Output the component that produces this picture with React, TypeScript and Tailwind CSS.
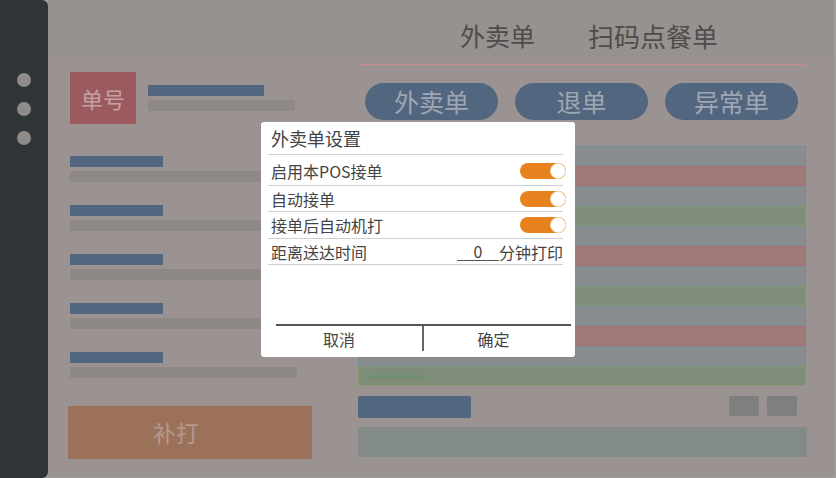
const ROWS: Array<'gray' | 'red' | 'green'> = [
  'gray', 'red', 'gray', 'green',
  'gray', 'red', 'gray', 'green',
  'gray', 'red', 'gray', 'green',
];

const rowClass: Record<'gray' | 'red' | 'green', string> = {
  gray: 'bg-[#898d8f] border-[#7b8a98]',
  red: 'bg-[#9e7a79] border-[#a47473]',
  green: 'bg-[#7f8c78] border-[#8a9a72]',
};

function Toggle() {
  return (
    <div className="relative w-[46px] h-[16px] rounded-full bg-[#e8821e] -mr-[3px]">
      <div className="absolute right-0 top-0 w-[16px] h-[16px] rounded-full bg-white border border-[#f3dcc4]" />
    </div>
  );
}

function SettingsDialog() {
  return (
    <div className="absolute left-[261px] top-[122px] w-[314px] h-[235px] bg-white rounded-[3px] flex flex-col pl-[7px] pr-[12px] text-[#444]">
      <div className="h-[33px] flex items-center pl-[3px] border-b border-[#cfcfcf] text-[18px]">
        外卖单设置
      </div>
      <div className="h-[31px] flex items-center justify-between pl-[3px] pt-[2px] border-b border-[#cfcfcf] text-[16px]">
        <span>启用本POS接单</span>
        <Toggle />
      </div>
      <div className="h-[26px] flex items-center justify-between pl-[3px] border-b border-[#cfcfcf] text-[16px]">
        <span>自动接单</span>
        <Toggle />
      </div>
      <div className="h-[27px] flex items-center justify-between pl-[3px] border-b border-[#cfcfcf] text-[16px]">
        <span>接单后自动机打</span>
        <Toggle />
      </div>
      <div className="h-[26px] flex items-center justify-between pl-[3px] border-b border-[#cfcfcf] text-[16px]">
        <span>距离送达时间</span>
        <span className="flex items-center">
          <span className="w-[42px] text-center border-b border-[#555] leading-[18px]">0</span>
          <span>分钟打印</span>
        </span>
      </div>
      <div className="flex-1" />
      <div className="ml-[8px] -mr-[8px] h-[27px] mb-[6px] border-t-2 border-[#555] flex text-[16px]">
        <div className="w-[148px] pr-[20px] flex items-center justify-center border-r-2 border-[#666]">取消</div>
        <div className="flex-1 pr-[8px] flex items-center justify-center">确定</div>
      </div>
    </div>
  );
}

export default function App() {
  return (
    <div
      className="relative w-[836px] h-[478px] flex bg-[#a19d9b] overflow-hidden"
      style={{ fontFamily: '"Noto Sans CJK SC", "Noto Sans", sans-serif' }}
    >
      {/* sidebar */}
      <div className="w-[48px] h-full bg-[#2f3437] rounded-r-[6px] flex flex-col items-center pt-[73px] gap-[15px]">
        <div className="w-[14px] h-[14px] rounded-full bg-[#8f8b89]" />
        <div className="w-[14px] h-[14px] rounded-full bg-[#8f8b89]" />
        <div className="w-[14px] h-[14px] rounded-full bg-[#8f8b89]" />
      </div>

      {/* main */}
      <div className="w-[786px] h-[477px] flex flex-col bg-[#9b9391]">
        <div className="h-[57px] bg-[#97918f] flex items-center pt-[14px] pl-[412px] gap-[53px] text-[#4f4c4b]">
          <span className="text-[25px]">外卖单</span>
          <span className="text-[26px]">扫码点餐单</span>
        </div>

        <div className="flex-1 flex">
          {/* left column */}
          <div className="w-[310px] pl-[22px] flex flex-col">
            <div className="mt-[15px] flex">
              <div className="w-[66px] h-[52px] bg-[#9c5a5e] text-[#c4a2a4] text-[22px] flex items-center justify-center">
                单号
              </div>
              <div className="ml-[12px] pt-[13px] flex flex-col gap-[4px]">
                <div className="w-[116px] h-[11px] bg-[#52667f]" />
                <div className="w-[147px] h-[11px] bg-[#8f8986]" />
              </div>
            </div>

            <div className="mt-[32px] flex flex-col gap-[23px]">
              {[0, 1, 2, 3, 4].map((i) => (
                <div key={i} className="flex flex-col gap-[4px]">
                  <div className="w-[93px] h-[11px] bg-[#52667f]" />
                  <div className="w-[227px] h-[11px] bg-[#8f8986]" />
                </div>
              ))}
            </div>

            <div className="mt-[28px] -ml-[2px] w-[244px] h-[53px] pr-[28px] bg-[#9c7159] text-[#b3988e] text-[23px] flex items-center justify-center">
              补打
            </div>
          </div>

          {/* right column */}
          <div className="w-[449px] flex flex-col">
            <div className="mt-[7px] h-[1px] w-[448px] bg-[#c98a8a]" />

            <div className="mt-[18px] pl-[7px] flex gap-[17px]">
              {['外卖单', '退单', '异常单'].map((t) => (
                <div
                  key={t}
                  className="w-[133px] h-[37px] rounded-full bg-[#52667f] text-[#9fa6b2] text-[25px] flex items-center justify-center"
                >
                  {t}
                </div>
              ))}
            </div>

            <div className="mt-[26px] w-[448px] flex flex-col">
              {ROWS.map((c, i) => (
                <div key={i} className={`h-[20px] border ${rowClass[c]} flex items-center pl-[11px]`}>
                  {i === ROWS.length - 1 && <div className="w-[56px] h-[3px] bg-[#6f9070]" />}
                </div>
              ))}
            </div>

            <div className="mt-[10px] flex items-start">
              <div className="w-[113px] h-[22px] rounded-[2px] bg-[#52667f]" />
              <div className="ml-auto mr-[10px] flex gap-[8px]">
                <div className="w-[30px] h-[20px] rounded-[2px] bg-[#7f7f7f]" />
                <div className="w-[30px] h-[20px] rounded-[2px] bg-[#7f7f7f]" />
              </div>
            </div>

            <div className="mt-[9px] w-[449px] h-[30px] rounded-[2px] bg-[#838b89]" />
          </div>
        </div>
      </div>

      <SettingsDialog />
    </div>
  );
}
